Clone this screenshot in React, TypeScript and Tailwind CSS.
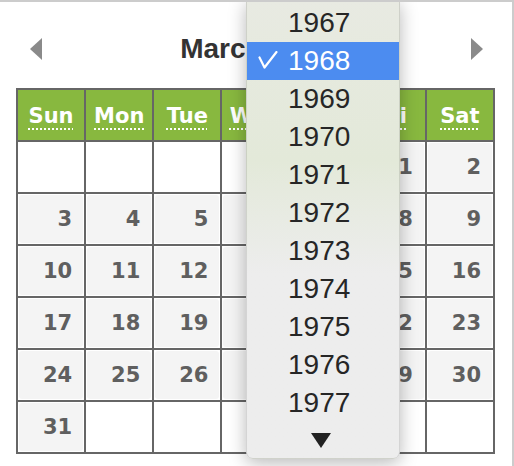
import React from "react"

const days = ["Sun", "Mon", "Tue", "Wed", "Thu", "Fri", "Sat"]
const years = [1967, 1968, 1969, 1970, 1971, 1972, 1973, 1974, 1975, 1976, 1977]

// March 1968 starts on a Friday
const cells: (number | null)[] = [
  ...Array(5).fill(null),
  ...Array.from({ length: 31 }, (_, i) => i + 1),
]
while (cells.length < 42) cells.push(null)

function YearMenu() {
  return (
    <div className="absolute left-[246px] top-[-2px] w-[154px] h-[459px] rounded-b-[7px] border border-t-0 border-black/10 bg-linear-to-b from-[#e8eae2] via-[#e3e9d9] via-35% to-[#ededed] to-60% shadow-[0_4px_18px_rgba(0,0,0,0.28)] pt-[4px]">
      {years.map((y) => {
        const selected = y === 1968
        return (
          <div
            key={y}
            className={
              selected
                ? "relative h-[38px] flex items-center pl-[41px] bg-[#4c8cf0] text-white"
                : "relative h-[38px] flex items-center pl-[41px] text-[#262626]"
            }
          >
            {selected && (
              <svg className="absolute left-[11px] top-[9px]" width="20" height="19" viewBox="0 0 20 19">
                <polyline points="1.5,6.5 6.5,16.5 18.5,1" fill="none" stroke="white" strokeWidth="2.2" strokeLinecap="round" strokeLinejoin="round" />
              </svg>
            )}
            <span className="text-[28px] leading-none font-['Liberation_Sans',Arial,sans-serif]">{y}</span>
          </div>
        )
      })}
      <div className="h-[37px] flex items-center justify-center pr-[4px]">
        <svg width="20" height="15" viewBox="0 0 20 15">
          <polygon points="0,0 20,0 10,15" fill="#222" />
        </svg>
      </div>
    </div>
  )
}

export default function App() {
  return (
    <div className="relative w-[514px] h-[466px] bg-white border-t-2 border-r-2 border-[#cccccc] overflow-hidden">
      <div className="flex items-center justify-between h-[86px] pl-[30px] pr-[29px] pt-[8px]">
        <svg width="12" height="22" viewBox="0 0 12 22">
          <polygon points="12,0 12,22 0,11" fill="#8a8a8a" />
        </svg>
        <h2 className="text-[28px] font-bold text-[#333] font-['Liberation_Sans',Arial,sans-serif] leading-none">
          March 1968
        </h2>
        <svg width="12" height="22" viewBox="0 0 12 22">
          <polygon points="0,0 12,11 0,22" fill="#8a8a8a" />
        </svg>
      </div>

      <div className="ml-[16px] w-[479px] grid grid-cols-7 gap-[2px] p-[2px] bg-[#666] font-['DejaVu_Sans',sans-serif]">
        {days.map((d) => (
          <div key={d} className="h-[50px] bg-[#88b83f] flex items-center justify-center pt-[4px]">
            <abbr className="text-[21px] font-bold text-white no-underline">
              <span className="underline decoration-dotted decoration-2 underline-offset-[5px]">{d}</span>
            </abbr>
          </div>
        ))}
        {cells.map((n, i) => (
          <div key={i} className="h-[50px] bg-white p-px">
            {n !== null && (
              <div className="h-full rounded-[3px] bg-[#f4f4f4] flex items-center justify-end pr-[11px] pt-[2px] text-[21px] font-bold text-[#5f5f5f]">
                {n}
              </div>
            )}
          </div>
        ))}
      </div>

      <YearMenu />
    </div>
  )
}
